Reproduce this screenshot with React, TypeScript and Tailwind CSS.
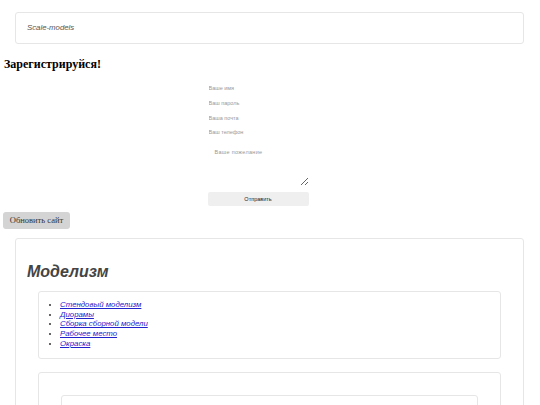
import React from 'react';

const links = ['Стендовый моделизм', 'Диорамы', 'Сборка сборной модели', 'Рабочее место', 'Окраска'];

export default function App() {
  return (
    <div className="bg-white font-['Liberation_Sans',Arial,sans-serif] overflow-hidden h-[405px]">
      <div className="ml-[15px] mr-[16px] pt-[12px]">
        <div className="h-[32px] border border-[#e6e6e6] rounded-[3px] flex items-center px-[11px]">
          <span className="italic text-[7.8px] text-[#555]">Scale-models</span>
        </div>
      </div>

      <h2 className="mt-[12px] ml-[4px] font-['Liberation_Serif',serif] font-bold text-[12px] leading-[16px] text-black">
        Зарегистрируйся!
      </h2>

      <form className="w-[101px] mx-auto mt-[9px] flex flex-col translate-x-[-12px]">
        {['Ваше имя', 'Ваш пароль', 'Ваша почта', 'Ваш телефон'].map((p) => (
          <input
            key={p}
            placeholder={p}
            className="h-[14.7px] px-[1px] text-[5.5px] outline-none bg-transparent placeholder:text-[#999]"
          />
        ))}
        <textarea
          placeholder="Ваше пожелание"
          className="mt-[3px] h-[43px] px-[7px] py-[5px] text-[5.5px] tracking-[0.3px] outline-none bg-transparent placeholder:text-[#999] resize-y"
        />
        <button
          type="button"
          className="mt-[6px] h-[14px] bg-[#efefef] rounded-[2px] text-[5.5px] font-medium text-[#222]"
        >
          Отправить
        </button>
      </form>

      <button
        type="button"
        className="ml-[3px] mt-[6px] w-[67px] h-[17px] bg-[#d4d4d4] rounded-[3px] font-['Liberation_Serif',serif] font-normal text-[8.5px] text-[#333]"
      >
        Обновить сайт
      </button>

      <div className="ml-[15px] mr-[16px] mt-[8px] border border-[#e6e6e6] rounded-[3px] px-[22px] pb-[20px]">
        <h1 className="pt-[21px] -ml-[11px] italic font-bold text-[16px] leading-[24px] text-[#444]">Моделизм</h1>
        <div className="mt-[7px] border border-[#e6e6e6] rounded-[3px] pl-[12px] pt-[8px] pb-[10px]">
          <ul className="list-disc pl-[9px] text-[7.8px] leading-[9.7px] text-[#333]">
            {links.map((l) => (
              <li key={l}>
                <a href="#" className="italic text-[#2222cc] underline">
                  {l}
                </a>
              </li>
            ))}
          </ul>
        </div>
        <div className="mt-[13px] border border-[#e6e6e6] rounded-[3px] px-[22px] pt-[22px] pb-[20px]">
          <div className="h-[80px] border border-[#e6e6e6] rounded-[3px]" />
        </div>
      </div>
    </div>
  );
}
